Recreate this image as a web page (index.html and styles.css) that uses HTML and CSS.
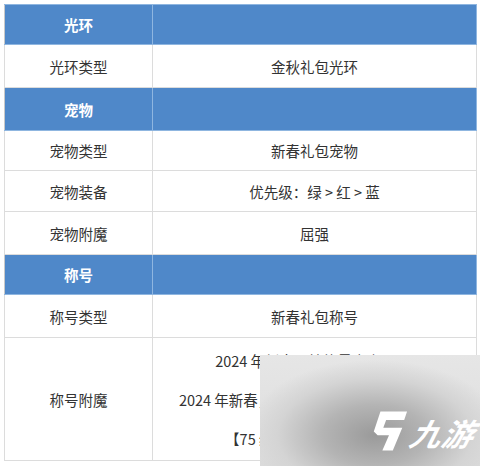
FILE: index.html
```html
<!DOCTYPE html>
<html lang="zh">
<head>
<meta charset="utf-8">
<link rel="stylesheet" href="styles.css">
</head>
<body>
<div class="page">
  <table class="info">
    <colgroup><col class="c1"><col class="c2"></colgroup>
    <tr class="head h40"><td>光环</td><td></td></tr>
    <tr class="h43"><td>光环类型</td><td>金秋礼包光环</td></tr>
    <tr class="head h43"><td>宠物</td><td></td></tr>
    <tr class="h40"><td>宠物类型</td><td>新春礼包宠物</td></tr>
    <tr class="h41"><td>宠物装备</td><td>优先级：绿 &gt; 红 &gt; 蓝</td></tr>
    <tr class="h43"><td>宠物附魔</td><td>屈强</td></tr>
    <tr class="head h40"><td>称号</td><td></td></tr>
    <tr class="h43"><td>称号类型</td><td>新春礼包称号</td></tr>
    <tr class="h123"><td>称号附魔</td><td>
      <div class="ln">2024 年新春，技能暴击率 +3%</div>
      <div class="ln">2024 年新春，所有属性伤害加成提升 +2%</div>
      <div class="ln">【75 级以下角色属性提升】</div>
    </td></tr>
  </table>
  <div class="mark">
    <svg class="logo" viewBox="0 0 40 46" width="38" height="45">
      <path d="M11 3 L39 3 L36 12 L17 12 L14 20 L34 20 L24 44 L13 44 L20 28 L8 28 L4 24 Z" fill="#fff"/>
    </svg>
    <span class="brand">九游</span>
  </div>
</div>
</body>
</html>
```
FILE: styles.css
```css
html, body { margin: 0; padding: 0; background: #fff; }
.page {
  position: relative;
  width: 480px;
  height: 466px;
  overflow: hidden;
  padding: 4px 0 0 4px;
  box-sizing: border-box;
  font-family: "Noto Sans CJK SC", "Liberation Sans", sans-serif;
}
.info {
  border-collapse: collapse;
  width: 472px;
  table-layout: fixed;
  font-size: 14.5px;
  color: #333;
}
.c1 { width: 148px; }
.c2 { width: 324px; }
.info td {
  border: 1px solid #dcdcdc;
  text-align: center;
  vertical-align: middle;
  padding: 0;
}
.head td {
  background: #4f88c9;
  color: #fff;
  font-weight: bold;
  border-color: #8fb6e0;
}
.head td:first-child { border-left-color: #c9c9c9; }
.h40 { height: 40px; }
.h41 { height: 41px; }
.h43 { height: 43px; }
.h123 { height: 123px; }
.ln { line-height: 39px; white-space: nowrap; }
.mark {
  position: absolute;
  left: 260px;
  top: 355px;
  width: 220px;
  height: 111px;
  background:
    radial-gradient(ellipse 130px 75px at 115px 80px, #9a9a9a 0%, #b4b4b4 40%, #d4d4d4 75%, rgba(228,228,228,0) 100%),
    linear-gradient(#e6e6e6, #dcdcdc);
  display: flex;
  align-items: flex-end;
  justify-content: flex-end;
  padding: 0 5px 13px 0;
  box-sizing: border-box;
  gap: 3px;
}
.logo { display: block; }
.brand {
  color: #fff;
  font-size: 31px;
  font-style: italic;
  font-weight: bold;
  line-height: 40px;
  letter-spacing: 1px;
  transform: skewX(-14deg);
}
```
